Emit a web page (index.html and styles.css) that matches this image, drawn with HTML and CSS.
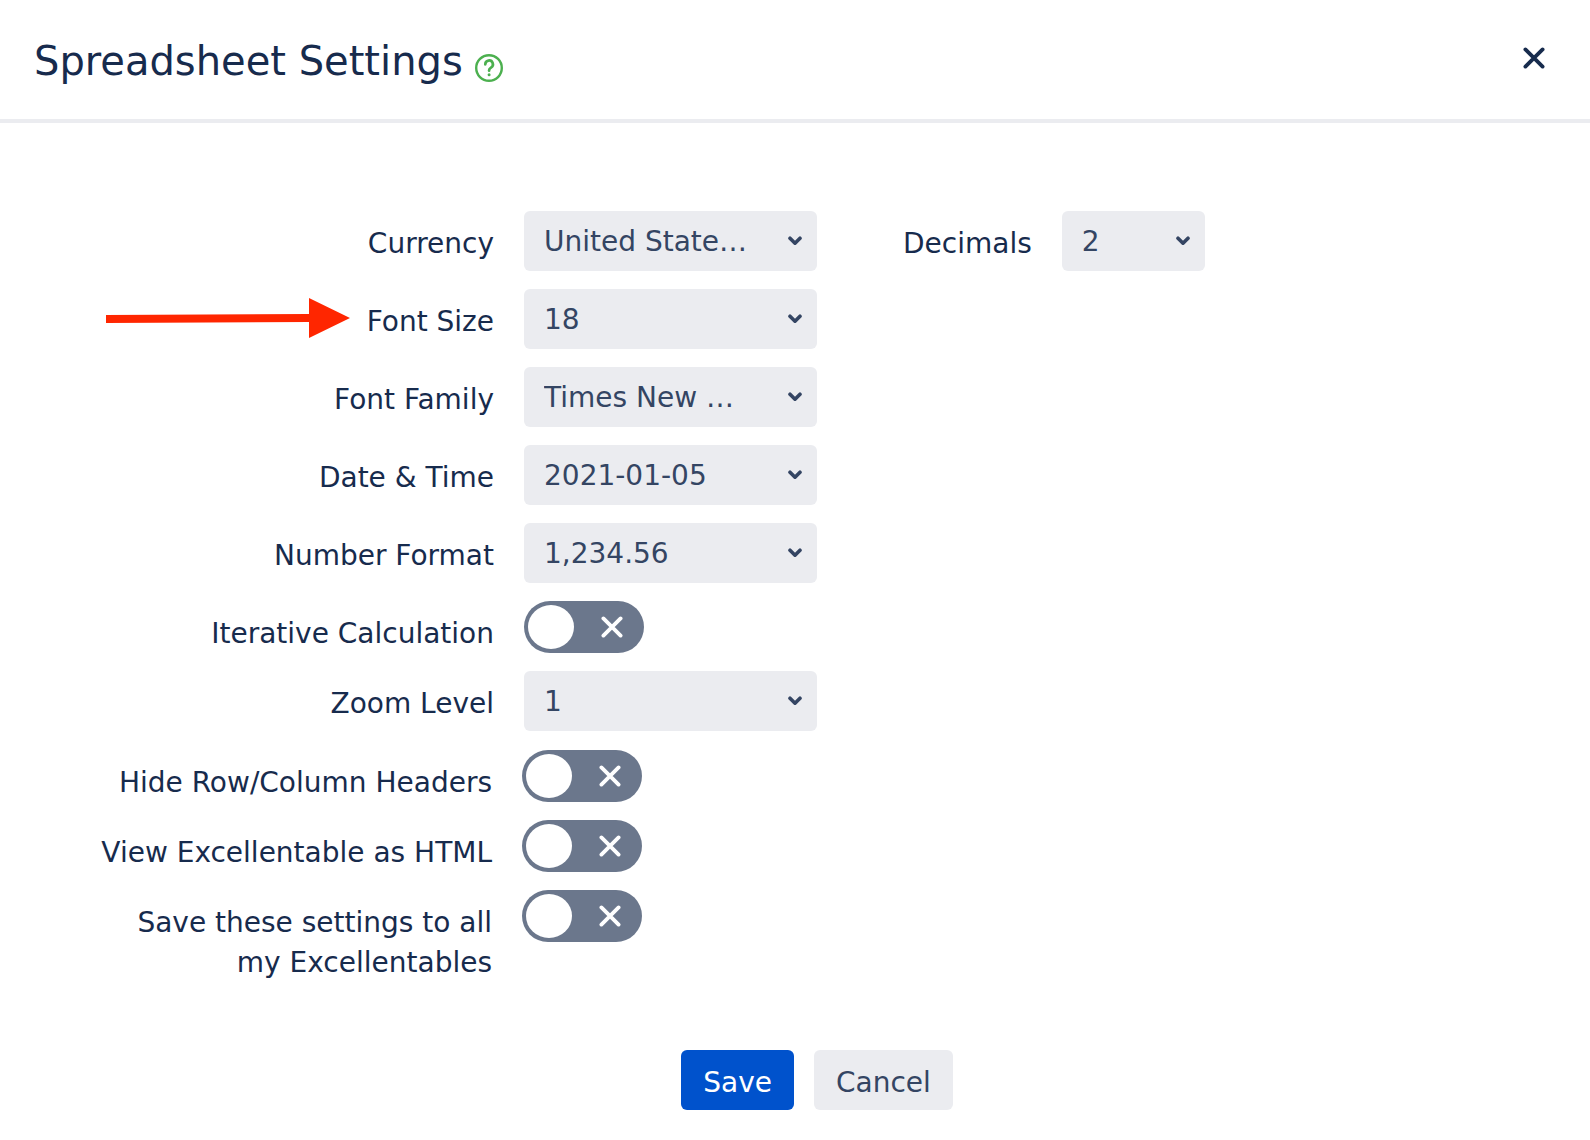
FILE: index.html
```html
<!DOCTYPE html>
<html lang="en">
<head>
<meta charset="utf-8">
<meta name="viewport" content="width=device-width, initial-scale=1">
<title>Spreadsheet Settings</title>
<link rel="stylesheet" href="styles.css">
</head>
<body>
<svg class="sprite" aria-hidden="true">
  <symbol id="chevron" viewBox="0 0 14 10"><path d="M2 2.2l5 5 5-5" fill="none" stroke="currentColor" stroke-width="3.6" stroke-linecap="round" stroke-linejoin="round"/></symbol>
  <symbol id="cross" viewBox="0 0 22 22"><path d="M2.4 2.4l17.2 17.2M19.6 2.4L2.4 19.6" fill="none" stroke="currentColor" stroke-width="3.8" stroke-linecap="round"/></symbol>
</svg>
<header class="header">
  <h1 class="title">Spreadsheet Settings</h1>
  <a class="help" href="#help" aria-label="Help">
    <svg viewBox="0 0 28 28" width="28" height="28" fill="none" stroke="currentColor" stroke-linecap="round" stroke-linejoin="round"><circle cx="14" cy="14" r="12.8" stroke-width="2.4"/><path d="M10.3 10.4a3.8 3.8 0 1 1 5.7 3.2c-1.2.7-1.9 1.3-1.9 2.6v.5" stroke-width="2.7"/><circle cx="14.1" cy="20.8" r="1.5" fill="currentColor" stroke="none"/></svg>
  </a>
  <button class="close" type="button" aria-label="Close"><svg width="22" height="22"><use href="#cross"/></svg></button>
</header>
<form class="form">
  <div class="group">
    <div class="row">
      <label class="label" for="currency">Currency</label>
      <div class="select"><select id="currency"><option>United States Dollar</option></select><svg class="chevron"><use href="#chevron"/></svg></div>
      <label class="label label-second" for="decimals">Decimals</label>
      <div class="select select-small"><select id="decimals"><option>2</option></select><svg class="chevron"><use href="#chevron"/></svg></div>
    </div>
    <div class="row">
      <svg class="pointer" viewBox="0 0 244 42" aria-hidden="true"><path d="M0 18L203 17V1l41 20-41 20V25L0 26z" fill="#ff2600"/></svg>
      <label class="label" for="font-size">Font Size</label>
      <div class="select"><select id="font-size"><option>18</option></select><svg class="chevron"><use href="#chevron"/></svg></div>
    </div>
    <div class="row">
      <label class="label" for="font-family">Font Family</label>
      <div class="select"><select id="font-family"><option>Times New Roman</option></select><svg class="chevron"><use href="#chevron"/></svg></div>
    </div>
    <div class="row">
      <label class="label" for="date">Date &amp; Time</label>
      <div class="select"><select id="date"><option>2021-01-05</option></select><svg class="chevron"><use href="#chevron"/></svg></div>
    </div>
    <div class="row">
      <label class="label" for="number">Number Format</label>
      <div class="select"><select id="number"><option>1,234.56</option></select><svg class="chevron"><use href="#chevron"/></svg></div>
    </div>
    <div class="row">
      <label class="label" for="iterative">Iterative Calculation</label>
      <div class="toggle"><input type="checkbox" role="switch" id="iterative"><svg class="off"><use href="#cross"/></svg></div>
    </div>
    <div class="row">
      <label class="label" for="zoom">Zoom Level</label>
      <div class="select"><select id="zoom"><option>1</option></select><svg class="chevron"><use href="#chevron"/></svg></div>
    </div>
  </div>
  <div class="group group-options">
    <div class="row">
      <label class="label" for="headers">Hide Row/Column Headers</label>
      <div class="toggle"><input type="checkbox" role="switch" id="headers"><svg class="off"><use href="#cross"/></svg></div>
    </div>
    <div class="row">
      <label class="label" for="html">View Excellentable as HTML</label>
      <div class="toggle"><input type="checkbox" role="switch" id="html"><svg class="off"><use href="#cross"/></svg></div>
    </div>
    <div class="row">
      <label class="label" for="all">Save these settings to all<br>my Excellentables</label>
      <div class="toggle"><input type="checkbox" role="switch" id="all"><svg class="off"><use href="#cross"/></svg></div>
    </div>
  </div>
  <div class="actions">
    <button class="button button-primary" type="submit">Save</button>
    <button class="button" type="button">Cancel</button>
  </div>
</form>
</body>
</html>
```
FILE: styles.css
```css
* { box-sizing: border-box; }

body {
  margin: 0;
  background: #fff;
  color: #172b4d;
  font: 28px/40px Verdana, "DejaVu Sans", sans-serif;
}

svg { display: block; }
.sprite { display: none; }

.header {
  display: flex;
  align-items: flex-start;
  padding: 37px 45px 34px 34px;
  border-bottom: 4px solid #ebecf0;
}
.title {
  margin: 0;
  font-size: 40px;
  line-height: 48px;
  font-weight: 400;
}
.help {
  margin: 17px 0 0 12px;
  color: #4cb04f;
}
.close {
  margin: 10px 0 0 auto;
  padding: 0;
  border: 0;
  background: none;
  color: #172b4d;
}

.form { padding-top: 88px; }
.group {
  --label-width: 494px;
  display: flex;
  flex-direction: column;
  gap: 18px;
}
.group-options {
  --label-width: 492px;
  margin-top: 19px;
}
.row {
  position: relative;
  display: flex;
  align-items: flex-start;
  gap: 30px;
}
.label {
  flex: none;
  width: var(--label-width);
  padding-top: 13px;
  margin-bottom: -2px;
  text-align: right;
}
.label-second {
  width: auto;
  margin-left: 56px;
}
.pointer {
  position: absolute;
  left: 106px;
  top: 8px;
  width: 244px;
  height: 42px;
}

.select {
  display: grid;
  align-items: center;
  width: 293px;
}
.select-small { width: 143px; }
.select select {
  grid-area: 1 / 1;
  appearance: none;
  width: 100%;
  height: 60px;
  margin: 0;
  padding: 2px 65px 0 20px;
  border: 0;
  border-radius: 6px;
  background: #ebecf0;
  color: #344563;
  font: inherit;
  text-overflow: ellipsis;
}
.chevron {
  grid-area: 1 / 1;
  justify-self: end;
  width: 14px;
  height: 10px;
  margin-right: 15px;
  color: #344563;
  pointer-events: none;
}

.toggle {
  display: grid;
  align-items: center;
  width: 120px;
}
.toggle input {
  grid-area: 1 / 1;
  display: grid;
  align-items: center;
  appearance: none;
  width: 120px;
  height: 52px;
  margin: 0;
  padding: 0 4px;
  border-radius: 26px;
  background: #6b778c;
}
.toggle input::before {
  content: "";
  width: 46px;
  height: 44px;
  border-radius: 50%;
  background: #fff;
}
.toggle input:checked::before { justify-self: end; }
.off {
  grid-area: 1 / 1;
  justify-self: end;
  width: 22px;
  height: 22px;
  margin-right: 21px;
  color: #fff;
  pointer-events: none;
}

.actions {
  display: flex;
  justify-content: center;
  gap: 20px;
  padding: 69px 0 30px 44px;
}
.button {
  height: 60px;
  padding: 6px 22px 0;
  border: 0;
  border-radius: 6px;
  background: #ebecf0;
  color: #344563;
  font: inherit;
}
.button-primary {
  background: #0052cc;
  color: #fff;
}
```
